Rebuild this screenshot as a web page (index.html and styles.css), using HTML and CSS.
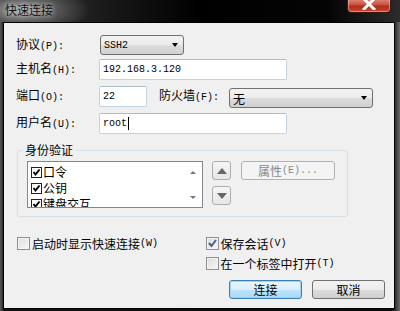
FILE: index.html
```html
<!DOCTYPE html>
<html lang="zh-CN">
<head>
    <meta charset="UTF-8">
    <title>快速连接</title>
    <link rel="stylesheet" href="styles.css">
</head>
<body>
    <div class="window">
        <div class="titlebar">
            <span class="title">快速连接</span>
            <div class="close">
                <svg width="14" height="11" viewBox="0 0 14 11"><path d="M2 0 L12 10 M12 0 L2 10" stroke="#fff" stroke-width="3" stroke-linecap="square"/></svg>
            </div>
        </div>

        <div class="client">
            <div class="row row-proto">
                <label class="lbl">协议<span class="lat">(P):</span></label>
                <div class="combo combo-proto"><span class="lat">SSH2</span><i class="arrow"></i></div>
            </div>
            <div class="row row-host">
                <label class="lbl">主机名<span class="lat">(H):</span></label>
                <div class="edit edit-wide"><span class="lat">192.168.3.120</span></div>
            </div>
            <div class="row row-port">
                <label class="lbl">端口<span class="lat">(O):</span></label>
                <div class="edit edit-port"><span class="lat">22</span></div>
                <label class="lbl lbl-fw">防火墙<span class="lat">(F):</span></label>
                <div class="combo combo-fw"><span>无</span><i class="arrow"></i></div>
            </div>
            <div class="row row-user">
                <label class="lbl">用户名<span class="lat">(U):</span></label>
                <div class="edit edit-wide"><span class="lat">root</span><i class="caret"></i></div>
            </div>

            <fieldset class="group">
                <legend>身份验证</legend>
                <div class="group-body">
                    <div class="listbox">
                        <div class="items">
                            <div class="item"><i class="lcheck"></i>口令</div>
                            <div class="item"><i class="lcheck"></i>公钥</div>
                            <div class="item"><i class="lcheck"></i>键盘交互</div>
                        </div>
                        <div class="vscroll">
                            <i class="sarrow up"></i>
                            <i class="sarrow down"></i>
                        </div>
                    </div>
                    <div class="updown">
                        <div class="sqbtn"><i class="tri up"></i></div>
                        <div class="sqbtn"><i class="tri down"></i></div>
                    </div>
                    <div class="btn btn-props">属性<span class="lat">(E)...</span></div>
                </div>
            </fieldset>

            <div class="options">
                <div class="opt-col">
                    <div class="check"><i class="box"></i>启动时显示快速连接<span class="lat">(W)</span></div>
                </div>
                <div class="opt-col opt-right">
                    <div class="check"><i class="box checked"></i>保存会话<span class="lat">(V)</span></div>
                    <div class="check"><i class="box"></i>在一个标签中打开<span class="lat">(T)</span></div>
                </div>
            </div>

            <div class="buttons">
                <div class="btn btn-main">连接</div>
                <div class="btn">取消</div>
            </div>
        </div>
    </div>
</body>
</html>
```

FILE: styles.css
```css
body {
    margin: 0;
    width: 400px;
    height: 311px;
    overflow: hidden;
    background-color: #111;
    font-family: "Noto Sans CJK SC", sans-serif;
    font-size: 12px;
    color: #000;
}

.lat {
    font-family: "Liberation Mono", monospace;
    font-size: 10px;
}

.window {
    height: 311px;
    box-sizing: border-box;
    padding: 0 5px 2px 3px;
    display: flex;
    flex-direction: column;
    background: linear-gradient(to right, #5a5a5a 0, #2a2a2a 3px, #111 4px, #0a0a0a 392px, #3a3a3a 396px, #6a6a6a 400px);
}

.titlebar {
    height: 22px;
    margin: 0 -5px 0 -3px;
    position: relative;
    background:
        radial-gradient(ellipse 70px 26px at 20px 10px, #9a9a9a 0, #5c5c5c 45%, rgba(20,20,20,0) 100%),
        linear-gradient(to right, #3a3a3a 0, #151515 120px, #000 200px, #050505 330px, #2c2c2c 400px);
}

.title {
    position: absolute;
    left: 5px;
    top: 2px;
    font-size: 12px;
    line-height: 16px;
    color: #111;
    text-shadow: 0 0 4px rgba(255,255,255,0.7), 0 0 8px rgba(255,255,255,0.4);
}

.close {
    position: absolute;
    left: 347px;
    top: -2px;
    width: 44px;
    height: 15px;
    border: 1px solid #3b1712;
    border-radius: 0 0 4px 4px;
    background: linear-gradient(to bottom, #e08a7b 0, #c9503e 45%, #b02c18 55%, #c94a30 100%);
    box-shadow: inset 0 0 0 1px rgba(255,200,190,0.5);
    display: flex;
    justify-content: center;
    align-items: flex-end;
    padding-bottom: 2px;
    box-sizing: border-box;
}

.close svg {
    display: block;
}

.client {
    flex: 1;
    background-color: #f0f0f0;
    border: 1px solid #000;
    padding: 12px 0 0 12px;
}

.row {
    display: flex;
    align-items: center;
}

.row-proto { height: 20px; }
.row-host { height: 21px; margin-top: 4px; }
.row-port { height: 21px; margin-top: 6px; }
.row-user { height: 21px; margin-top: 6px; }

.lbl {
    width: 83px;
    flex: none;
    line-height: 14px;
}

.lbl-fw {
    width: 70px;
    margin-left: 12px;
}

.edit {
    height: 21px;
    box-sizing: border-box;
    background: #fff;
    border: 1px solid #c2d3e2;
    border-top-color: #a9bdd0;
    border-radius: 2px;
    display: flex;
    align-items: center;
    padding-left: 3px;
}

.edit-wide { width: 188px; }
.edit-port { width: 48px; }

.caret {
    width: 1px;
    height: 13px;
    background: #000;
    margin-left: 1px;
}

.combo {
    height: 20px;
    box-sizing: border-box;
    border: 1px solid #707070;
    border-radius: 3px;
    background: linear-gradient(to bottom, #f3f3f3 0, #ebebeb 50%, #dddddd 51%, #d0d0d0 100%);
    display: flex;
    align-items: center;
    padding: 0 5px 0 3px;
    position: relative;
}

.combo-proto { width: 84px; margin-left: 1px; }
.combo-fw { width: 144px; margin-top: 3px; height: 20px; }

.arrow {
    margin-left: auto;
    width: 0;
    height: 0;
    border-left: 3.5px solid transparent;
    border-right: 3.5px solid transparent;
    border-top: 4px solid #000;
}

.group {
    margin: 9px 0 0 1px;
    width: 331px;
    box-sizing: border-box;
    border: 1px solid #d5dfe5;
    border-radius: 3px;
    padding: 4px 0 8px 9px;
}

.group legend {
    padding: 0 2px;
    margin-left: -4px;
    line-height: 14px;
}

.group-body {
    display: flex;
    align-items: flex-start;
}

.listbox {
    width: 176px;
    height: 47px;
    box-sizing: border-box;
    border: 1px solid #828790;
    background: #fff;
    display: flex;
    overflow: hidden;
}

.items {
    flex: 1;
    padding: 2px 0 0 3px;
}

.item {
    height: 16px;
    display: flex;
    align-items: center;
    line-height: 16px;
}

.lcheck {
    width: 11px;
    height: 11px;
    box-sizing: border-box;
    border: 1px solid #222;
    margin-right: 1px;
    background: #fff url("data:image/svg+xml;utf8,<svg xmlns='http://www.w3.org/2000/svg' width='9' height='9'><path d='M1.5 4 L3.5 6.5 L7.5 1.5' fill='none' stroke='black' stroke-width='2'/></svg>") no-repeat center;
}

.vscroll {
    width: 17px;
    position: relative;
}

.sarrow {
    position: absolute;
    left: 5px;
    width: 0;
    height: 0;
    border-left: 3px solid transparent;
    border-right: 3px solid transparent;
}

.sarrow.up { top: 9px; border-bottom: 3px solid #777; }
.sarrow.down { bottom: 8px; border-top: 3px solid #777; }

.updown {
    margin-left: 9px;
    display: flex;
    flex-direction: column;
    gap: 6px;
}

.sqbtn {
    width: 19px;
    height: 19px;
    box-sizing: border-box;
    border: 1px solid #adadad;
    border-radius: 3px;
    background: linear-gradient(to bottom, #f6f6f6, #e6e6e6);
    display: flex;
    align-items: center;
    justify-content: center;
}

.tri {
    width: 0;
    height: 0;
    border-left: 5px solid transparent;
    border-right: 5px solid transparent;
}

.tri.up { border-bottom: 6px solid #666; }
.tri.down { border-top: 6px solid #666; }

.btn {
    height: 19px;
    box-sizing: border-box;
    border: 1px solid #707070;
    border-radius: 3px;
    background: linear-gradient(to bottom, #f2f2f2 0, #ebebeb 50%, #dddddd 51%, #cfcfcf 100%);
    display: flex;
    align-items: center;
    justify-content: center;
    line-height: 14px;
    width: 73px;
}

.btn-props {
    width: 94px;
    margin-left: 10px;
    color: #8a8a8a;
    border-color: #adb2b5;
    background: #f4f4f4;
}

.options {
    display: flex;
    margin-top: 20px;
}

.opt-col {
    width: 207px;
    margin-left: 1px;
}

.opt-right {
    margin-left: 0;
}

.check {
    display: flex;
    align-items: center;
    height: 13px;
    line-height: 13px;
    margin-bottom: 7px;
}

.box {
    width: 13px;
    height: 13px;
    box-sizing: border-box;
    border: 1px solid #8f8f8f;
    background: linear-gradient(135deg, #dcdcdc, #f8f8f8);
    box-shadow: inset 0 0 0 1px #f4f4f4;
    margin-right: 2px;
    flex: none;
}

.box.checked {
    background: url("data:image/svg+xml;utf8,<svg xmlns='http://www.w3.org/2000/svg' width='11' height='11'><path d='M2 5 L4.5 8 L9 2' fill='none' stroke='%234a5c8c' stroke-width='2'/></svg>") no-repeat center, linear-gradient(135deg, #dcdcdc, #f8f8f8);
}

.buttons {
    display: flex;
    justify-content: flex-end;
    gap: 10px;
    margin: 3px 9px 0 0;
}

.btn-main {
    border-color: #3c7fb1;
    background: linear-gradient(to bottom, #eaf6fd 0, #d9f0fc 50%, #bee6fd 51%, #a7d9f5 100%);
    box-shadow: inset 0 0 0 1px #9ed5f2;
}
```
